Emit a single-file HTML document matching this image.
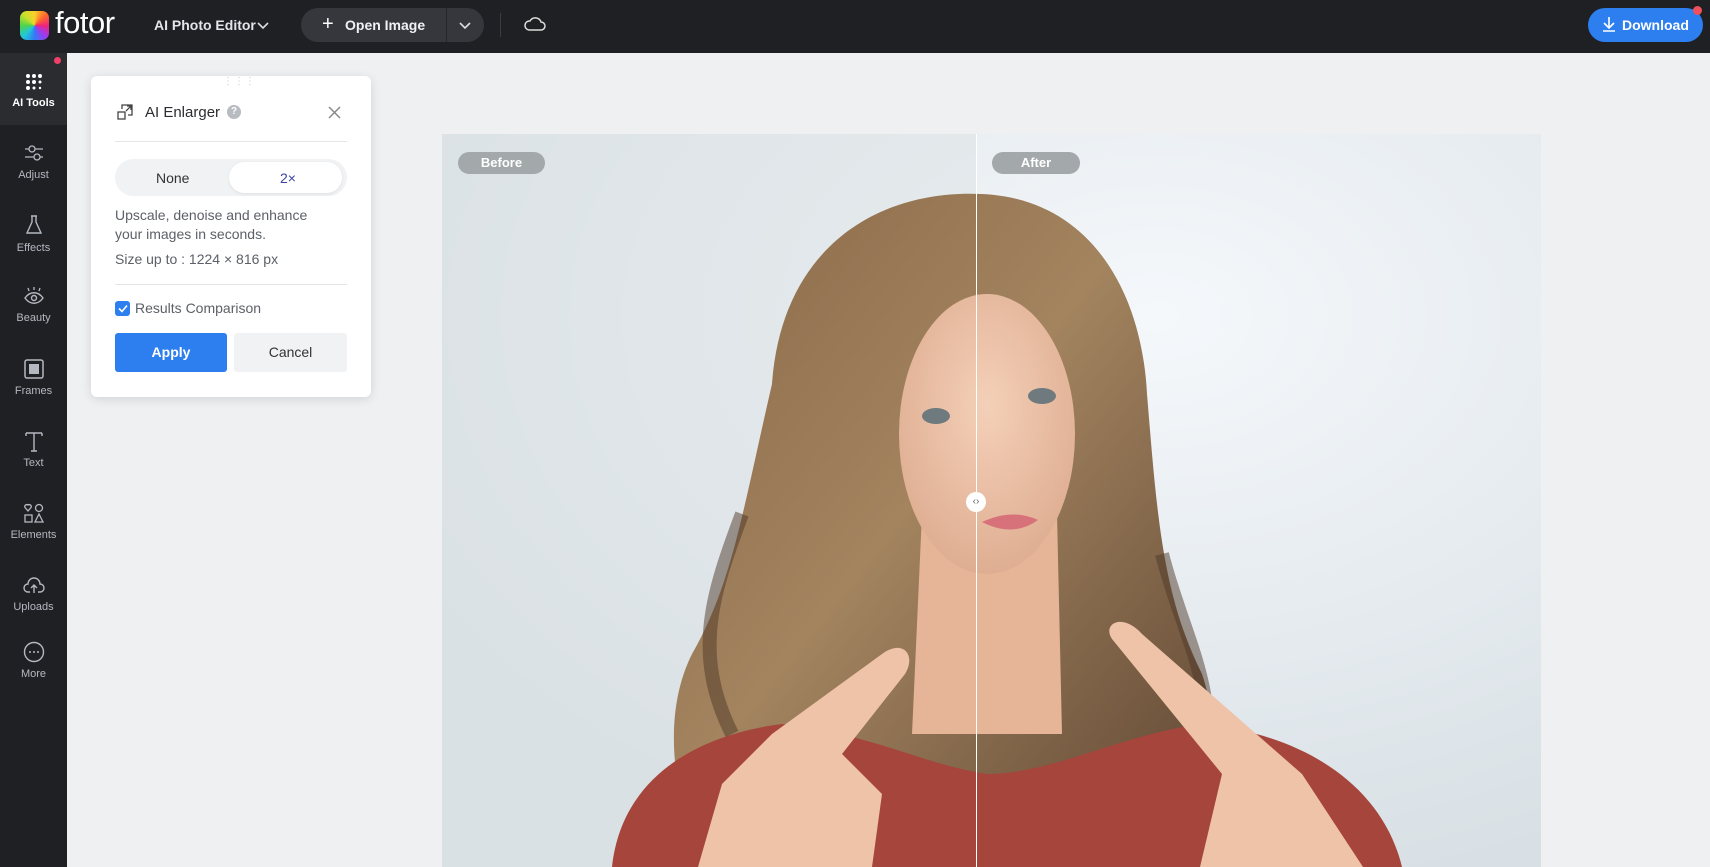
<!DOCTYPE html>
<html><head><meta charset="utf-8"><style>
*{margin:0;padding:0;box-sizing:border-box}
body{width:1710px;height:867px;overflow:hidden;background:#eef0f2;font-family:"Liberation Sans",sans-serif;position:relative}
.top{position:absolute;left:0;top:0;width:1710px;height:53px;background:#1f2024}
.side{position:absolute;left:0;top:53px;width:67px;height:814px;background:#1f2024}
.it{position:absolute;left:0;width:67px;text-align:center;color:#b4b8c0;font-size:11px}
.it svg{display:block;margin:0 auto}
.abs{position:absolute}
.panel{position:absolute;left:91px;top:76px;width:280px;height:321px;background:#fff;border-radius:6px;box-shadow:0 2px 10px rgba(0,0,0,.12)}
.panel .t{color:#5d6068;font-size:14px}
</style></head><body>
<div class="top"></div>
<div class="abs" style="left:20px;top:11px;width:29px;height:29px;border-radius:7px;background:conic-gradient(#f8d22c,#ff6b2b,#f0247b,#9a3cf0,#2f7cf6,#22c7d8,#4ed34b,#c8e02c,#f8d22c)"></div>
<div class="abs" style="left:55px;top:5px;color:#fff;font-size:31px;letter-spacing:-0.5px">fotor</div>
<div class="abs" style="left:154px;top:17px;color:#e3e5ea;font-size:14px;font-weight:bold">AI Photo Editor</div>
<svg class="abs" style="left:257px;top:21px" width="12" height="10"><path d="M1 2l5 5 5-5" stroke="#ddd" stroke-width="1.6" fill="none"/></svg>
<div class="abs" style="left:301px;top:8px;width:183px;height:34px;border-radius:17px;background:#35373c"></div>
<div class="abs" style="left:446px;top:8px;width:1px;height:34px;background:#25262a"></div>
<div class="abs" style="left:322px;top:13px;color:#fff;font-size:20px">+</div>
<div class="abs" style="left:345px;top:17px;color:#f0f1f4;font-size:14px;font-weight:bold">Open Image</div>
<svg class="abs" style="left:459px;top:21px" width="12" height="10"><path d="M1 2l5 5 5-5" stroke="#ddd" stroke-width="1.6" fill="none"/></svg>
<div class="abs" style="left:500px;top:13px;width:1px;height:24px;background:#3a3c42"></div>
<svg class="abs" style="left:523px;top:14px" width="24" height="20"><path d="M6 16h12a4 4 0 0 0 0-8 6 6 0 0 0-11-1 4.5 4.5 0 0 0-1 9z" stroke="#ddd" stroke-width="1.5" fill="none"/></svg>
<div class="abs" style="left:1588px;top:8px;width:115px;height:34px;border-radius:17px;background:#2d7ff0"></div>
<div class="abs" style="left:1693px;top:6px;width:9px;height:9px;border-radius:50%;background:#f0505c"></div>
<svg class="abs" style="left:1601px;top:16px" width="16" height="17"><path d="M8 1v11M3 7l5 5 5-5M2 15h12" stroke="#fff" stroke-width="1.6" fill="none"/></svg>
<div class="abs" style="left:1622px;top:17px;color:#fff;font-size:14px;font-weight:bold">Download</div>

<div class="side"></div>
<div class="abs" style="left:0;top:53px;width:67px;height:72px;background:#2b2c30"></div>
<div class="abs" style="left:54px;top:57px;width:7px;height:7px;border-radius:50%;background:#f0406a"></div>
<div class="it" style="top:72px;color:#fff;font-weight:bold"><svg width="20" height="20"><g fill="#fff"><circle cx="4" cy="4" r="2"/><circle cx="10" cy="4" r="2"/><circle cx="16" cy="4" r="2"/><circle cx="4" cy="10" r="2"/><circle cx="10" cy="10" r="2"/><circle cx="16" cy="10" r="1.5"/><circle cx="4" cy="16" r="2"/><circle cx="10" cy="16" r="1.5"/><circle cx="16" cy="16" r="1.2"/></g></svg><div style="margin-top:5px">AI Tools</div></div>
<div class="it" style="top:143px"><svg width="22" height="20"><path d="M2 6h18M2 14h18" stroke="#b4b8c0" stroke-width="1.3"/><circle cx="9" cy="6" r="3" fill="#1f2024" stroke="#b4b8c0" stroke-width="1.3"/><circle cx="14" cy="14" r="3" fill="#1f2024" stroke="#b4b8c0" stroke-width="1.3"/></svg><div style="margin-top:6px">Adjust</div></div>
<div class="it" style="top:214px"><svg width="20" height="22"><path d="M7 2h6M8 2v6L3 19h14L12 8V2" stroke="#b4b8c0" stroke-width="1.4" fill="none"/></svg><div style="margin-top:6px">Effects</div></div>
<div class="it" style="top:286px"><svg width="22" height="20"><path d="M2 12c5-7 13-7 18 0-5 7-13 7-18 0z" stroke="#b4b8c0" stroke-width="1.4" fill="none"/><circle cx="11" cy="12" r="2.5" stroke="#b4b8c0" stroke-width="1.4" fill="none"/><path d="M11 1v3M5 2l1 3M17 2l-1 3" stroke="#b4b8c0" stroke-width="1.3"/></svg><div style="margin-top:6px">Beauty</div></div>
<div class="it" style="top:358px"><svg width="22" height="22"><rect x="2" y="2" width="18" height="18" rx="2" stroke="#b4b8c0" stroke-width="1.5" fill="none"/><rect x="6" y="6" width="10" height="10" fill="#b4b8c0"/></svg><div style="margin-top:5px">Frames</div></div>
<div class="it" style="top:430px"><svg width="22" height="22"><path d="M3 3h16M11 3v18M8 21h6M3 3v3M19 3v3" stroke="#b4b8c0" stroke-width="1.4" fill="none"/></svg><div style="margin-top:5px">Text</div></div>
<div class="it" style="top:502px"><svg width="22" height="22"><path d="M5 9L2 5.5a2 2 0 0 1 3-2.5 2 2 0 0 1 3 2.5z" stroke="#b4b8c0" stroke-width="1.3" fill="none"/><circle cx="16" cy="6" r="3.5" stroke="#b4b8c0" stroke-width="1.3" fill="none"/><rect x="2" y="13" width="7" height="7" stroke="#b4b8c0" stroke-width="1.3" fill="none"/><path d="M16 12l4 8h-8z" stroke="#b4b8c0" stroke-width="1.3" fill="none"/></svg><div style="margin-top:5px">Elements</div></div>
<div class="it" style="top:574px"><svg width="24" height="22"><path d="M8 18H6a4 4 0 0 1 0-8 6 6 0 0 1 12 0 4 4 0 0 1 0 8h-2M12 19v-8M9 14l3-3 3 3" stroke="#b4b8c0" stroke-width="1.4" fill="none"/></svg><div style="margin-top:5px">Uploads</div></div>
<div class="it" style="top:641px"><svg width="22" height="22"><circle cx="11" cy="11" r="9.5" stroke="#b4b8c0" stroke-width="1.4" fill="none"/><circle cx="7" cy="11" r="1" fill="#b4b8c0"/><circle cx="11" cy="11" r="1" fill="#b4b8c0"/><circle cx="15" cy="11" r="1" fill="#b4b8c0"/></svg><div style="margin-top:5px">More</div></div>

<svg class="abs" style="left:442px;top:134px" width="1099" height="733" viewBox="0 0 1099 733">
<defs>
<radialGradient id="bg" cx="0.65" cy="0.25" r="0.8"><stop offset="0" stop-color="#f5f8fb"/><stop offset="1" stop-color="#d8e0e5"/></radialGradient>
<linearGradient id="hair" x1="0" y1="0" x2="1" y2="1"><stop offset="0" stop-color="#8a6848"/><stop offset=".45" stop-color="#a3845f"/><stop offset="1" stop-color="#5e4533"/></linearGradient>
<radialGradient id="skin" cx=".5" cy=".4" r=".6"><stop offset="0" stop-color="#f4d0b8"/><stop offset="1" stop-color="#dfae92"/></radialGradient>
</defs>
<rect width="1099" height="733" fill="url(#bg)"/>
<rect x="0" width="534" height="733" fill="#dbe1e4" opacity=".5"/>
<path d="M330 250C340 110 440 55 540 60 650 65 700 160 705 260 715 380 720 460 760 540 780 600 770 650 740 700L700 733H260C230 660 220 580 250 520 290 450 300 380 330 250z" fill="url(#hair)"/>
<path d="M300 380C270 460 250 520 290 600M720 420C740 500 780 560 760 640" stroke="#4e3828" stroke-width="14" fill="none" opacity=".5"/>
<path d="M480 380L470 600H620L615 380z" fill="#e6b597"/>
<ellipse cx="545" cy="300" rx="88" ry="140" fill="url(#skin)"/>
<path d="M170 733C180 640 260 600 340 590 430 600 480 630 545 640 610 640 680 600 760 590 860 600 940 650 960 733z" fill="#a6453b"/>
<path d="M256 733L280 650 330 600 440 520C460 505 475 520 463 540L400 620 440 660 430 733z" fill="#eec3a8"/>
<path d="M921 733L860 640 700 500C680 478 660 490 670 505L780 640 758 733z" fill="#eec3a8"/>
<ellipse cx="494" cy="282" rx="14" ry="8" fill="#6f7a7e"/>
<ellipse cx="600" cy="262" rx="14" ry="8" fill="#6f7a7e"/>
<path d="M540 388q30-14 56-2q-25 18-56 2z" fill="#d8727a"/>
</svg>
<div class="abs" style="left:976px;top:134px;width:1px;height:733px;background:#fff"></div>
<div class="abs" style="left:966px;top:492px;width:20px;height:20px;border-radius:50%;background:#fff;color:#666;font-size:10px;text-align:center;line-height:20px">‹›</div>
<div class="abs" style="left:458px;top:152px;width:87px;height:22px;border-radius:11px;background:#a3a8ab;color:#fff;font-size:13px;font-weight:bold;text-align:center;line-height:22px">Before</div>
<div class="abs" style="left:992px;top:152px;width:88px;height:22px;border-radius:11px;background:#a3a8ab;color:#fff;font-size:13px;font-weight:bold;text-align:center;line-height:22px">After</div>

<div class="panel">
 <div class="abs" style="left:132px;top:0;color:#c5c7cc;font-size:10px;letter-spacing:1px">⋮⋮⋮</div>
 <svg class="abs" style="left:26px;top:28px" width="16" height="16"><rect x="1" y="8" width="7" height="7" stroke="#444" stroke-width="1.3" fill="none"/><path d="M5 5V1h10v10h-4M9 7l5-5M10 2h4v4" stroke="#444" stroke-width="1.3" fill="none"/></svg>
 <div class="abs" style="left:54px;top:28px;color:#2a2c30;font-size:15px">AI Enlarger</div>
 <div class="abs" style="left:136px;top:29px;width:14px;height:14px;border-radius:50%;background:#b8bbc0;color:#fff;font-size:10px;text-align:center;line-height:14px;font-weight:bold">?</div>
 <svg class="abs" style="left:237px;top:30px" width="13" height="13"><path d="M1 1l11 11M12 1L1 12" stroke="#888" stroke-width="1.5"/></svg>
 <div class="abs" style="left:24px;top:65px;width:232px;height:1px;background:#e3e5e8"></div>
 <div class="abs" style="left:24px;top:83px;width:232px;height:37px;border-radius:19px;background:#f1f2f4"></div>
 <div class="abs" style="left:138px;top:86px;width:113px;height:31px;border-radius:16px;background:#fff;box-shadow:0 1px 3px rgba(0,0,0,.08)"></div>
 <div class="abs" style="left:65px;top:94px;color:#333;font-size:14px">None</div>
 <div class="abs" style="left:189px;top:94px;color:#3a44a0;font-size:14px">2×</div>
 <div class="abs t" style="left:24px;top:130px;line-height:19px">Upscale, denoise and enhance<br>your images in seconds.</div>
 <div class="abs t" style="left:24px;top:175px">Size up to : 1224 × 816 px</div>
 <div class="abs" style="left:24px;top:208px;width:232px;height:1px;background:#e3e5e8"></div>
 <div class="abs" style="left:24px;top:225px;width:15px;height:15px;border-radius:3px;background:#2d7ff0"></div>
 <svg class="abs" style="left:27px;top:228px" width="10" height="9"><path d="M1 4.5l3 3 5-6" stroke="#fff" stroke-width="1.6" fill="none"/></svg>
 <div class="abs t" style="left:44px;top:224px;font-size:14px">Results Comparison</div>
 <div class="abs" style="left:24px;top:257px;width:112px;height:39px;border-radius:3px;background:#2d7ff0;color:#fff;font-size:14px;font-weight:bold;text-align:center;line-height:39px">Apply</div>
 <div class="abs" style="left:143px;top:257px;width:113px;height:39px;border-radius:3px;background:#f1f2f4;color:#333;font-size:14px;text-align:center;line-height:39px">Cancel</div>
</div>
</body></html>
